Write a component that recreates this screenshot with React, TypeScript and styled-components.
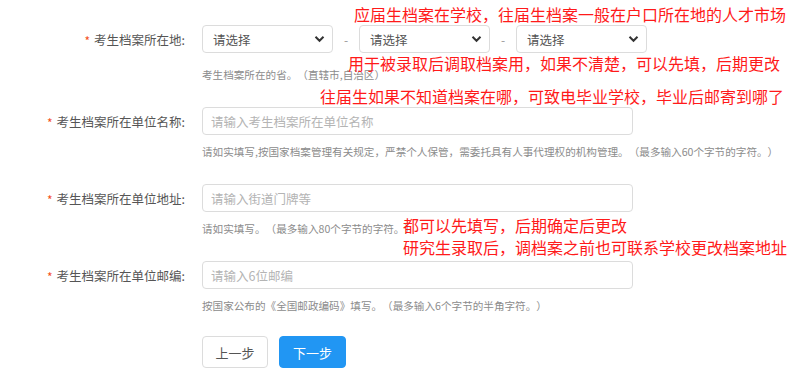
import React from "react";
import styled, { createGlobalStyle } from "styled-components";

const GlobalStyle = createGlobalStyle`
  html, body { margin: 0; padding: 0; background: #fff; }
  body {
    font-family: "Noto Sans CJK SC", "Noto Sans", sans-serif;
    text-spacing-trim: space-all;
  }
`;

const Page = styled.div`
  position: relative;
  width: 794px;
  height: 383px;
  overflow: hidden;
  padding-top: 25px;
  box-sizing: border-box;
`;

const Item = styled.div`
  display: grid;
  grid-template-columns: 185px 1fr;
  column-gap: 17px;
  margin-bottom: 25px;
`;

const Label = styled.div`
  height: 28px;
  display: flex;
  align-items: center;
  justify-content: flex-end;
  font-size: 12.5px;
  color: #555;
  white-space: nowrap;
`;

const Star = styled.span`
  color: #f4511e;
  font-size: 12px;
  margin-right: 4px;
  position: relative;
  top: 1px;
`;

const Field = styled.div`
  display: flex;
  flex-direction: column;
`;

const Controls = styled.div`
  display: flex;
  align-items: center;
  height: 28px;
`;

const SelectBox = styled.div`
  width: 131px;
  height: 28px;
  box-sizing: border-box;
  border: 1px solid #dcdcdc;
  border-radius: 4px;
  display: flex;
  align-items: center;
  justify-content: space-between;
  padding: 0 7px 0 10px;
  font-size: 12.5px;
  color: #555;
`;

const Dash = styled.span`
  width: 26px;
  text-align: center;
  color: #999;
  font-size: 12px;
`;

const Input = styled.input`
  width: 431px;
  height: 28px;
  box-sizing: border-box;
  border: 1px solid #dcdcdc;
  border-radius: 4px;
  padding: 0 8px;
  font-family: "Noto Sans CJK SC", sans-serif;
  font-size: 12.5px;
  color: #555;
  outline: none;
  &::placeholder { color: #b4b4b4; }
`;

const Help = styled.div<{ $gap: number }>`
  margin-top: ${(p) => p.$gap}px;
  height: 14px;
  line-height: 14px;
  font-size: 10.6px;
  color: #8c8c8c;
  white-space: nowrap;
`;

const Buttons = styled.div`
  display: flex;
  gap: 11px;
  margin-left: 202px;
  margin-top: -2px;
`;

const Button = styled.button<{ $primary?: boolean }>`
  height: 32px;
  padding: 0;
  width: ${(p) => (p.$primary ? 67 : 66)}px;
  box-sizing: border-box;
  border-radius: 4px;
  font-family: "Noto Sans CJK SC", sans-serif;
  font-size: 13px;
  border: 1px solid ${(p) => (p.$primary ? "#2196f3" : "#dcdcdc")};
  background: ${(p) => (p.$primary ? "#2196f3" : "#fff")};
  color: ${(p) => (p.$primary ? "#fff" : "#555")};
`;

const Note = styled.div<{ $x: number; $y: number }>`
  position: absolute;
  left: ${(p) => p.$x}px;
  top: ${(p) => p.$y}px;
  font-size: 16px;
  line-height: 20px;
  color: #ff1a1a;
  white-space: nowrap;
`;

const Chevron = () => (
  <svg width="11" height="8" viewBox="0 0 11 8">
    <path d="M1.5 1.8 L5.5 5.8 L9.5 1.8" fill="none" stroke="#333" strokeWidth="2" />
  </svg>
);

const Select = () => (
  <SelectBox>
    <span>请选择</span>
    <Chevron />
  </SelectBox>
);

export default function App() {
  return (
    <>
      <GlobalStyle />
      <Page>
        <Item>
          <Label><Star>*</Star>考生档案所在地:</Label>
          <Field>
            <Controls>
              <Select />
              <Dash>-</Dash>
              <Select />
              <Dash>-</Dash>
              <Select />
            </Controls>
            <Help $gap={15}>考生档案所在的省。（直辖市,自治区）</Help>
          </Field>
        </Item>
        <Item>
          <Label><Star>*</Star>考生档案所在单位名称:</Label>
          <Field>
            <Controls>
              <Input placeholder="请输入考生档案所在单位名称" />
            </Controls>
            <Help $gap={10}>请如实填写,按国家档案管理有关规定，严禁个人保管，需委托具有人事代理权的机构管理。（最多输入60个字节的字符。）</Help>
          </Field>
        </Item>
        <Item>
          <Label><Star>*</Star>考生档案所在单位地址:</Label>
          <Field>
            <Controls>
              <Input placeholder="请输入街道门牌等" />
            </Controls>
            <Help $gap={10}>请如实填写。（最多输入80个字节的字符。）</Help>
          </Field>
        </Item>
        <Item>
          <Label><Star>*</Star>考生档案所在单位邮编:</Label>
          <Field>
            <Controls>
              <Input placeholder="请输入6位邮编" />
            </Controls>
            <Help $gap={10}>按国家公布的《全国邮政编码》填写。（最多输入6个字节的半角字符。）</Help>
          </Field>
        </Item>
        <Buttons>
          <Button>上一步</Button>
          <Button $primary>下一步</Button>
        </Buttons>

        <Note $x={354} $y={4}>应届生档案在学校，往届生档案一般在户口所在地的人才市场</Note>
        <Note $x={348} $y={53}>用于被录取后调取档案用，如果不清楚，可以先填，后期更改</Note>
        <Note $x={320} $y={86}>往届生如果不知道档案在哪，可致电毕业学校，毕业后邮寄到哪了</Note>
        <Note $x={403} $y={215}>都可以先填写，后期确定后更改</Note>
        <Note $x={403} $y={237}>研究生录取后，调档案之前也可联系学校更改档案地址</Note>
      </Page>
    </>
  );
}
